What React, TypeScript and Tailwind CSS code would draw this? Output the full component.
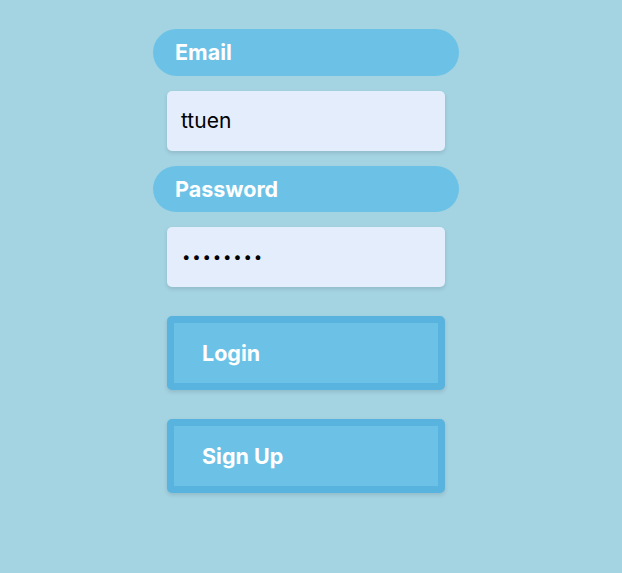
export default function App() {
  return (
    <div
      className="min-h-[573px] w-full bg-[#a4d3e2] pt-[29px] pl-[153px]"
      style={{ fontFamily: "Inter, 'Noto Sans', sans-serif" }}
    >
      <div className="flex w-[306px] flex-col">
        <label className="flex h-[47px] items-center rounded-full bg-[#6cc2e6] px-[22px] text-[21.5px] font-bold text-white">
          Email
        </label>
        <div className="mt-[15px] ml-[14px] flex h-[60px] w-[278px] items-center rounded-[5px] bg-[#e3edfc] px-[14px] text-[21px] text-black shadow-[0_2px_4px_rgba(0,0,0,0.12)]">
          ttuen
        </div>
        <label className="mt-[15px] flex h-[46px] items-center rounded-full bg-[#6cc2e6] px-[22px] text-[21.5px] font-bold text-white">
          Password
        </label>
        <div className="mt-[15px] ml-[14px] flex h-[60px] w-[278px] items-center rounded-[5px] bg-[#e3edfc] px-[15px] text-[15px] tracking-[1.8px] text-black shadow-[0_2px_4px_rgba(0,0,0,0.12)]">
          ••••••••
        </div>
        <button className="mt-[29px] ml-[14px] flex h-[74px] w-[278px] items-center rounded-[5px] border-[7px] border-[#59b3df] bg-[#6cc2e6] px-[28px] text-[21.5px] font-bold text-white shadow-[0_2px_4px_rgba(0,0,0,0.12)]">
          Login
        </button>
        <button className="mt-[29px] ml-[14px] flex h-[74px] w-[278px] items-center rounded-[5px] border-[7px] border-[#59b3df] bg-[#6cc2e6] px-[28px] text-[21.5px] font-bold text-white shadow-[0_2px_4px_rgba(0,0,0,0.12)]">
          Sign Up
        </button>
      </div>
    </div>
  );
}
